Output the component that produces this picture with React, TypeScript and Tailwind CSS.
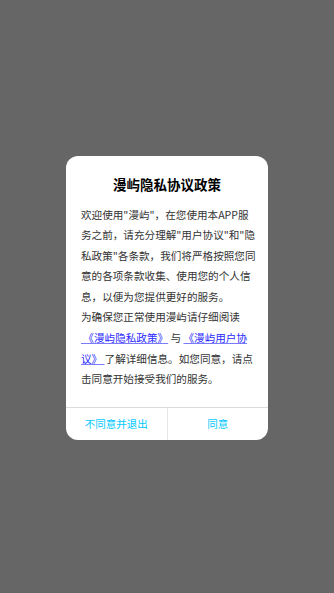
import React from "react";

const font = { fontFamily: '"Noto Sans CJK SC", "Noto Sans", sans-serif' };

export default function App() {
  const line = "block whitespace-nowrap";
  const link = "text-[#2a2aff] underline decoration-[#7a7aff]";
  return (
    <div
      className="w-[334px] h-[593px] bg-[#666666] flex items-center justify-center"
      style={font}
    >
      <div className="w-[202px] h-[284px] bg-white rounded-[12px] flex flex-col overflow-hidden mt-[2px]">
        <div className="pt-[18px] text-center text-[13.5px] leading-[20px] font-bold text-black">
          漫屿隐私协议政策
        </div>
        <div className="px-[15px] pt-[11px] text-[10.6px] leading-[20.6px] text-[#333] flex-1">
          <span className={line}>欢迎使用"漫屿"，在您使用本APP服</span>
          <span className={line}>务之前，请充分理解"用户协议"和"隐</span>
          <span className={line}>私政策"各条款，我们将严格按照您同</span>
          <span className={line}>意的各项条款收集、使用您的个人信</span>
          <span className={line}>息，以便为您提供更好的服务。</span>
          <span className={line}>为确保您正常使用漫屿请仔细阅读</span>
          <span className={line}>
            <a className={link}>&nbsp;《漫屿隐私政策》</a> 与 <a className={link}>《漫屿用户协</a>
          </span>
          <span className={line}>
            <a className={link}>议》&nbsp;</a>了解详细信息。如您同意，请点
          </span>
          <span className={line}>击同意开始接受我们的服务。</span>
        </div>
        <div className="h-[33px] border-t border-[#dcdcdc] flex text-[10.5px] text-[#00c8ff]">
          <div className="flex-1 flex items-center justify-center border-r border-[#e6e6e6]">
            不同意并退出
          </div>
          <div className="flex-1 flex items-center justify-center">同意</div>
        </div>
      </div>
    </div>
  );
}
